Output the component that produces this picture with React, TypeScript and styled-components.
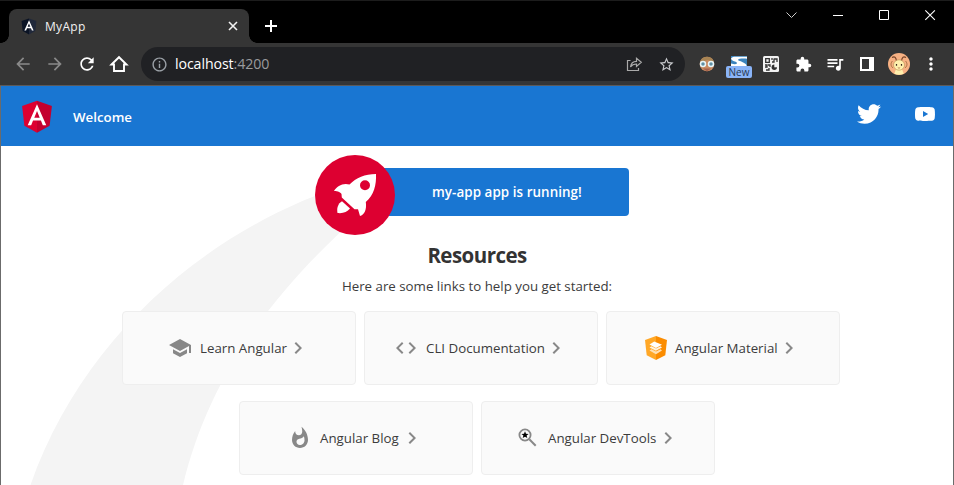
import React from "react";
import styled, { createGlobalStyle } from "styled-components";
import { FaTwitter } from "react-icons/fa";

const GlobalStyle = createGlobalStyle`
  * { box-sizing: border-box; }
  body { margin: 0; overflow: hidden; }
  svg { display: block; flex: none; }
`;

const Window = styled.div`
  width: 954px;
  height: 485px;
  display: flex;
  flex-direction: column;
  overflow: hidden;
  background: #fff;
  color: #3c3c3c;
  font-family: "Open Sans", "Noto Sans", sans-serif;
  font-size: 13.3px;
`;

const TabStrip = styled.div`
  height: 43px;
  display: flex;
  background: #000;
  border-top: 1px solid #1c1c1c;
  padding: 8px 0 0 9px;
  flex: none;
`;

const Tab = styled.div`
  position: relative;
  width: 240px;
  height: 34px;
  display: flex;
  align-items: center;
  padding: 0 9px 0 10px;
  background: #353535;
  border-radius: 8px 8px 0 0;
  color: #f1f1f1;
  &::before, &::after {
    content: "";
    position: absolute;
    bottom: 0;
    width: 8px;
    height: 8px;
  }
  &::before { left: -8px; background: radial-gradient(circle at 0 0, #000 7.5px, #353535 8px); }
  &::after { right: -8px; background: radial-gradient(circle at 100% 0, #000 7.5px, #353535 8px); }
`;

const TabTitle = styled.span`
  flex: 1;
  margin-left: 6px;
  padding-top: 1px;
  font-size: 12px;
  line-height: 18px;
  letter-spacing: 0.3px;
`;

const NewTab = styled.div`
  margin: 11px 0 0 16px;
`;

const WindowControls = styled.div`
  margin-left: auto;
  padding-right: 16px;
  display: flex;
  gap: 30px;
`;

const Toolbar = styled.div`
  height: 43px;
  flex: none;
  display: flex;
  align-items: center;
  background: #353535;
  border-bottom: 1px solid #5c5a5a;
  padding: 0 7px 0 13px;
`;

const NavIcons = styled.div`
  display: flex;
  gap: 12px;
  width: 128px;
`;

const AddressBar = styled.div`
  width: 544px;
  height: 34px;
  border-radius: 17px;
  background: #202124;
  display: flex;
  align-items: center;
  padding: 0 10px;
`;

const Url = styled.span`
  flex: 1;
  margin-left: 7px;
  font-size: 14.2px;
  line-height: 20px;
  letter-spacing: -0.1px;
  color: #fff;
`;

const UrlPort = styled.span`
  color: #9a9b9d;
`;

const AddressActions = styled.div`
  display: flex;
  gap: 15px;
`;

const Extensions = styled.div`
  flex: 1;
  display: grid;
  grid-template-columns: repeat(8, 32px);
  place-items: center;
  margin-left: 6px;
`;

const BadgedIcon = styled.div`
  position: relative;
  width: 16px;
  height: 16px;
`;

const Badge = styled.span`
  position: absolute;
  left: -5px;
  top: 10px;
  width: 26px;
  height: 12px;
  border-radius: 2px;
  background: #8ab4f8;
  color: #28384f;
  font-size: 10px;
  line-height: 12px;
  text-align: center;
`;

const Page = styled.main`
  position: relative;
  flex: 1;
  border: solid #6b6b6b;
  border-width: 0 1px;
  z-index: 0;
`;

const Header = styled.header`
  height: 60px;
  display: flex;
  align-items: center;
  background: #1976d2;
  color: #fff;
  font-weight: 600;
  padding: 0 16px;
`;

const Brand = styled.span`
  flex: 1;
  margin-left: 16px;
  padding-top: 2px;
  line-height: 20px;
`;

const Socials = styled.div`
  display: flex;
  align-items: center;
  gap: 32px;
  margin-top: -4px;
`;

const Smoke = styled.svg`
  position: absolute;
  left: 0;
  top: 60px;
  z-index: -1;
`;

const Hero = styled.section`
  display: flex;
  align-items: center;
  height: 82px;
  margin: 8px 0 0 314px;
`;

const HeroPill = styled.div`
  width: 274px;
  height: 48px;
  margin: -6px 0 0 -40px;
  border-radius: 4px;
  background: #1976d2;
  color: #fff;
  font-weight: 600;
  font-size: 13.4px;
  letter-spacing: 0.06px;
  line-height: 48px;
  padding-left: 77px;
  white-space: nowrap;
`;

const Rocket = styled.svg`
  position: relative;
  z-index: 1;
`;

const Title = styled.h2`
  margin: 3px 0 0;
  text-align: center;
  color: #333;
  font-size: 20.5px;
  line-height: 32px;
  font-weight: 700;
  letter-spacing: -0.55px;
`;

const Intro = styled.p`
  margin: 5px 0 15px;
  text-align: center;
  line-height: 20px;
`;

const CardRow = styled.div<{ $indent: number }>`
  display: flex;
  gap: 8px;
  margin: 0 0 16px ${(p) => p.$indent}px;
`;

const Card = styled.a<{ $left: number }>`
  width: 234px;
  height: 74px;
  display: flex;
  align-items: center;
  padding-left: ${(p) => p.$left}px;
  border: 1px solid #eee;
  border-radius: 4px;
  background: #fafafa;
`;

const CardLabel = styled.span<{ $width: number }>`
  width: ${(p) => p.$width}px;
  margin-left: 8px;
  line-height: 20px;
  white-space: nowrap;
`;

const Shield = ({ size, left, right }: { size: number; left: string; right: string }) => (
  <svg width={size} height={size} viewBox="0 0 250 250">
    <path fill={left} d="M125 30 31.9 63.2 46.1 186.3 125 230z" />
    <path fill={right} d="M125 30v200l78.9-43.7L218.1 63.2z" />
    <path fill="#fff" d="M125 52.1 66.8 182.6h21.7l11.7-29.2h49.4l11.7 29.2H183zM142 135.4h-34l17-40.9z" />
  </svg>
);

const Glyph = ({ d, size = 24, fill = "#888" }: { d: string; size?: number; fill?: string }) => (
  <svg width={size} height={size} viewBox="0 0 24 24">
    <path d={d} fill={fill} />
  </svg>
);

const paths = {
  back: "M20 11H7.83l5.59-5.59L12 4l-8 8 8 8 1.41-1.41L7.83 13H20v-2z",
  forward: "M12 4l-1.41 1.41L16.17 11H4v2h12.17l-5.58 5.59L12 20l8-8z",
  reload: "M17.65 6.35C16.2 4.9 14.21 4 12 4c-4.42 0-7.99 3.58-7.99 8s3.57 8 7.99 8c3.73 0 6.84-2.55 7.73-6h-2.08c-.82 2.33-3.04 4-5.65 4-3.31 0-6-2.69-6-6s2.69-6 6-6c1.66 0 3.14.69 4.22 1.78L13 11h7V4l-2.35 2.35z",
  info: "M11 7h2v2h-2zm0 4h2v6h-2zm1-9C6.48 2 2 6.48 2 12s4.48 10 10 10 10-4.48 10-10S17.52 2 12 2zm0 18c-4.41 0-8-3.59-8-8s3.59-8 8-8 8 3.59 8 8-3.59 8-8 8z",
  star: "M22 9.24l-7.19-.62L12 2 9.19 8.63 2 9.24l5.46 4.73L5.82 21 12 17.27 18.18 21l-1.63-7.03L22 9.24zM12 15.4l-3.76 2.27 1-4.28-3.32-2.88 4.38-.38L12 6.1l1.71 4.04 4.38.38-3.32 2.88 1 4.28L12 15.4z",
  puzzle: "M20.5 11H19V7c0-1.1-.9-2-2-2h-4V3.5a2.5 2.5 0 0 0-5 0V5H4c-1.1 0-1.99.9-1.99 2v3.8H3.5a2.7 2.7 0 0 1 0 5.4H2V20c0 1.1.9 2 2 2h3.8v-1.5a2.7 2.7 0 0 1 5.4 0V22H17c1.1 0 2-.9 2-2v-4h1.5a2.5 2.5 0 0 0 0-5z",
  queue: "M15 6H3v2h12V6zm0 4H3v2h12v-2zM3 16h8v-2H3v2zM17 6v8.18c-.31-.11-.65-.18-1-.18-1.66 0-3 1.34-3 3s1.34 3 3 3 3-1.34 3-3V8h3V6h-5z",
  dots: "M12 8c1.1 0 2-.9 2-2s-.9-2-2-2-2 .9-2 2 .9 2 2 2zm0 2c-1.1 0-2 .9-2 2s.9 2 2 2 2-.9 2-2-.9-2-2-2zm0 6c-1.1 0-2 .9-2 2s.9 2 2 2 2-.9 2-2-.9-2-2-2z",
  youtube: "M21.58 7.19c-.23-.86-.91-1.54-1.77-1.77C18.25 5 12 5 12 5s-6.25 0-7.81.42c-.86.23-1.54.91-1.77 1.77C2 8.75 2 12 2 12s0 3.25.42 4.81c.23.86.91 1.54 1.77 1.77C5.75 19 12 19 12 19s6.25 0 7.81-.42c.86-.23 1.54-.91 1.77-1.77C22 15.25 22 12 22 12s0-3.25-.42-4.81zM10 15V9l5.2 3-5.2 3z",
  school: "M5 13.18v4L12 21l7-3.82v-4L12 17l-7-3.82zM12 3L1 9l11 6 9-4.91V17h2V9L12 3z",
  code: "M9.4 16.6L4.8 12l4.6-4.6L8 6l-6 6 6 6 1.4-1.4zm5.2 0l4.6-4.6-4.6-4.6L16 6l6 6-6 6-1.4-1.4z",
  fire: "M13.5.67s.74 2.65.74 4.8c0 2.06-1.35 3.73-3.41 3.73-2.07 0-3.63-1.67-3.63-3.73l.03-.36C5.21 7.51 4 10.62 4 14c0 4.42 3.58 8 8 8s8-3.58 8-8C20 8.61 17.41 3.8 13.5.67zM11.71 19c-1.78 0-3.22-1.4-3.22-3.14 0-1.62 1.05-2.76 2.81-3.12 1.77-.36 3.6-1.21 4.62-2.58.39 1.29.59 2.65.59 4.04 0 2.65-2.15 4.8-4.8 4.8z",
  chevron: "M10 6L8.59 7.41 13.17 12l-4.58 4.59L10 18l6-6z",
};

const MaterialShield = () => (
  <svg width="22" height="24" viewBox="0 0 22 24">
    <path fill="#ffa726" d="M11 0 0 4l1.7 15.2L11 24z" />
    <path fill="#fb8c00" d="M11 0v24l9.300-4.800L22 4z" />
    <path fill="#ffe0b2" d="m4.500 14.500 2-1.200 4.500 2.200 4.500-2.200 1.500 1.200-6 3.700z" />
    <path fill="#fff3e0" d="m4.500 11.500 2-1.200 4.500 2.200 4.500-2.200 1.500 1.200-6 3.200z" />
    <path fill="#fff" d="m4.500 8.500 4.700-3L17 8.700l-6 3.200z" />
  </svg>
);

const SearchStar = () => (
  <svg width="24" height="24" viewBox="0 0 24 24">
    <circle cx="9" cy="9" r="5.6" fill="none" stroke="#888" strokeWidth="1.8" />
    <path d="m13.3 13.3 6.4 6.400" stroke="#888" strokeWidth="2" />
    <path d="m9 5.3 1 2.4 2.6.2-2 1.7.7 2.5L9 10.8l-2.3 1.3.7-2.5-2-1.7 2.6-.2z" fill="#000" />
  </svg>
);

const Chevron = () => <Glyph d={paths.chevron} />;

const App = () => (
  <>
    <GlobalStyle />
    <Window>
      <TabStrip>
        <Tab>
          <Shield size={20} left="#0b1425" right="#20283a" />
          <TabTitle>MyApp</TabTitle>
          <svg width="14" height="14" viewBox="0 0 14 14">
            <path d="m3 3 8 8m0-8-8 8" stroke="#f1f1f1" strokeWidth="1.6" />
          </svg>
        </Tab>
        <NewTab>
          <svg width="12" height="12" viewBox="0 0 12 12">
            <path d="M6 0v12M0 6h12" stroke="#fff" strokeWidth="2" />
          </svg>
        </NewTab>
        <WindowControls>
          <svg width="16" height="14" viewBox="0 0 16 14">
            <path d="m2.500 3.500 5 5 5-5" fill="none" stroke="#ccc" />
          </svg>
          <svg width="16" height="14" viewBox="0 0 16 14">
            <path d="M3 6.5h10" stroke="#fff" />
          </svg>
          <svg width="16" height="14" viewBox="0 0 16 14">
            <path d="M3.5 1.5h9v9h-9z" fill="none" stroke="#fff" />
          </svg>
          <svg width="16" height="14" viewBox="0 0 16 14">
            <path d="m3.3 1.3 9.6 9.6m0-9.6-9.6 9.6" stroke="#fff" strokeWidth="1.1" />
          </svg>
        </WindowControls>
      </TabStrip>
      <Toolbar>
        <NavIcons>
          <Glyph d={paths.back} size={20} fill="#8a8a8a" />
          <Glyph d={paths.forward} size={20} fill="#8a8a8a" />
          <Glyph d={paths.reload} size={20} fill="#fff" />
          <svg width="20" height="20" viewBox="0 0 20 20">
            <path d="M2.500 10.500 10 3.200l7.500 7.300H15V17H5v-6.500z" fill="none" stroke="#fff" strokeWidth="1.9" />
          </svg>
        </NavIcons>
        <AddressBar>
          <Glyph d={paths.info} size={17} fill="#9aa0a6" />
          <Url>
            localhost<UrlPort>:4200</UrlPort>
          </Url>
          <AddressActions>
            <svg width="17" height="16" viewBox="0 0 17 16">
              <path d="M4.500 4.500h-3v10h11V12M4.500 11c.5-3.700 2.800-5.500 6-5.600V2.200l4.800 4.100-4.800 4.200V8c-2.500 0-4.500.7-6 3z" fill="none" stroke="#aaa" strokeWidth="1.2" />
            </svg>
            <Glyph d={paths.star} size={17} fill="#c7c9cc" />
          </AddressActions>
        </AddressBar>
        <Extensions>
          <svg width="16" height="16" viewBox="0 0 16 16">
            <circle cx="8" cy="8" r="7.3" fill="#c88b62" />
            <path d="M1 6C2 2.500 4.500.7 8 .7S14 2.500 15 6L9 4z" fill="#a88454" />
            <path d="M4 12.500h8L8 15.500z" fill="#a7634e" />
            <circle cx="4" cy="8" r="2.500" fill="#5f8fa3" stroke="#e8f5f8" strokeWidth="1.500" />
            <circle cx="12" cy="8" r="2.500" fill="#5f8fa3" stroke="#e8f5f8" strokeWidth="1.500" />
          </svg>
          <BadgedIcon>
            <svg width="16" height="16" viewBox="0 0 16 16">
              <path d="M0 0h16v12H0z" fill="#3c84bd" />
              <path d="M0 2.500C1 1 2.500.7 5 .7h11v2C12 2.500 7 2.500 7 4c0 1 6 1.500 8.500 5v1H0V7.500c4 1 6 .8 6-.5C6 5.500 0 5 0 2.500z" fill="#fff" />
            </svg>
            <Badge>New</Badge>
          </BadgedIcon>
          <svg width="16" height="16" viewBox="0 0 16 16">
            <rect width="16" height="16" rx="1.500" fill="#f2f2f2" />
            <path d="M2.700 2.700h3.600v3.600H2.700zM9 2v2M9 6h2V2.500M11 3h3v3M2 9h2v2H2m3-2h2v2M3 14h2m1-2v2H4" fill="none" stroke="#333" strokeWidth="1.300" />
            <circle cx="11.300" cy="11.300" r="2.700" fill="#2f2f2f" />
            <path d="M11.300 11.300V8h3.500v3.300z" fill="#f2f2f2" />
          </svg>
          <Glyph d={paths.puzzle} size={17} fill="#fff" />
          <Glyph d={paths.queue} size={20} fill="#fff" />
          <svg width="16" height="16" viewBox="0 0 16 16">
            <path d="M2 2h12v12H2z" fill="none" stroke="#fff" strokeWidth="2" />
            <path d="M10 2h5v12h-5z" fill="#fff" />
          </svg>
          <svg width="22" height="22" viewBox="0 0 22 22">
            <circle cx="11" cy="11" r="11" fill="#f7b183" />
            <path d="M8.500 8C8 4 6.500 3 4 4.500M13.500 8c.5-4 2-5 4.500-3.500" fill="none" stroke="#754226" strokeWidth="1.100" />
            <path d="M4.500 8c-2 2-2 5 .5 7M17.500 8c2 2 2 5-.5 7" fill="none" stroke="#9d6a3c" strokeWidth=".9" />
            <path d="M6.300 20.700 8 16h6l1.700 4.700A11 11 0 0 1 6.300 20.700z" fill="#fff0ad" />
            <ellipse cx="11" cy="12" rx="5.500" ry="5.200" fill="#fff0ad" stroke="#b98d52" strokeWidth=".6" />
            <path d="M8.500 11v1.800m5-1.800v1.800" stroke="#3e2b20" strokeWidth="1.200" />
            <path d="m9.800 14.500 1.200.8 1.200-.8" fill="none" stroke="#a35c3b" strokeWidth=".7" />
          </svg>
          <Glyph d={paths.dots} size={20} fill="#fff" />
        </Extensions>
      </Toolbar>
      <Page>
        <Header>
          <Shield size={40} left="#dd0031" right="#c3002f" />
          <Brand>Welcome</Brand>
          <Socials>
            <FaTwitter size={24} color="#fff" />
            <Glyph d={paths.youtube} fill="#fff" />
          </Socials>
        </Header>
        <Smoke width="400" height="339" viewBox="1 146 400 339">
          <path d="M355 182C212 225 83 335 30.500 485H183C207 385 264 300 357 217z" fill="#f4f4f4" />
        </Smoke>
        <Hero>
          <Rocket width="80" height="80" viewBox="0 0 80 80">
            <circle cx="40" cy="40" r="40" fill="#dd0031" />
            <path
              fillRule="evenodd"
              fill="#fff"
              d="M61 19C50 19 41 23 34.500 29.500 28 27.500 22 31 19 36 23 36 26 37.500 26.500 39L26.800 42.500 39.500 54.200H43L45 61C49 60 52 55 50.800 47 59 40 61.500 30 61 19zM50 25.300a5 5 0 1 0 0 10 5 5 0 0 0 0-10z"
            />
            <path fill="#fff" d="M27 46.200 35 53.500C32 57 28 58.700 22.500 58 21.500 53 23 48.500 27 46.200z" />
          </Rocket>
          <HeroPill>my-app app is running!</HeroPill>
        </Hero>
        <Title>Resources</Title>
        <Intro>Here are some links to help you get started:</Intro>
        <CardRow $indent={121}>
          <Card $left={45}>
            <Glyph d={paths.school} />
            <CardLabel $width={86}>Learn Angular</CardLabel>
            <Chevron />
          </Card>
          <Card $left={29}>
            <Glyph d={paths.code} />
            <CardLabel $width={118}>CLI Documentation</CardLabel>
            <Chevron />
          </Card>
          <Card $left={38}>
            <MaterialShield />
            <CardLabel $width={102}>Angular Material</CardLabel>
            <Chevron />
          </Card>
        </CardRow>
        <CardRow $indent={238}>
          <Card $left={48}>
            <Glyph d={paths.fire} />
            <CardLabel $width={80}>Angular Blog</CardLabel>
            <Chevron />
          </Card>
          <Card $left={34}>
            <SearchStar />
            <CardLabel $width={108}>Angular DevTools</CardLabel>
            <Chevron />
          </Card>
        </CardRow>
      </Page>
    </Window>
  </>
);

export default App;
